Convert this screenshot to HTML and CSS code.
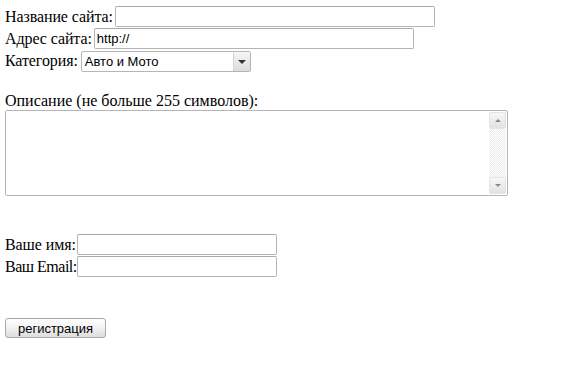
FILE: index.html
```html
<!DOCTYPE html>
<html lang="ru">
<head>
    <meta charset="UTF-8">
    <title>Добавить сайт</title>
    <link rel="stylesheet" href="styles.css">
</head>
<body>
    <form class="reg">
        <div class="row"><span class="lbl">Название сайта:</span><input class="field wide" type="text"></div>
        <div class="row"><span class="lbl">Адрес сайта:</span><input class="field wide" type="text" value="http://"></div>
        <div class="row"><span class="lbl cat">Категория:</span><span class="select"><span class="select-text">Авто и Мото</span><span class="select-btn"><span class="tri down dark"></span></span></span></div>

        <div class="row desc-label">Описание (не больше 255 символов):</div>
        <div class="area">
            <textarea class="area-text"></textarea>
            <div class="scroll">
                <div class="sbtn"><span class="tri up"></span></div>
                <div class="track"></div>
                <div class="sbtn"><span class="tri down"></span></div>
            </div>
        </div>

        <div class="row name-row"><span class="lbl user">Ваше имя:</span><input class="field short" type="text"></div>
        <div class="row"><span class="lbl user mail">Ваш Email:</span><input class="field short" type="text"></div>

        <div class="submit-row">
            <button class="btn" type="button">регистрация</button>
        </div>
    </form>
</body>
</html>
```

FILE: styles.css
```css
body{
    margin: 0;
    background: #ffffff;
    color: #000;
    font-family: "Liberation Serif", "Times New Roman", serif;
    font-size: 16px;
}
.reg{
    padding: 6px 0 0 5px;
    display: flex;
    flex-direction: column;
    align-items: flex-start;
}
.row{
    display: flex;
    align-items: center;
    height: 22px;
    white-space: nowrap;
}
.lbl{
    margin-right: 2px;
    letter-spacing: -0.1px;
}
.lbl.cat{ margin-right: 3px; }
.lbl.user{
    width: 70px;
    margin-right: 2px;
}
.lbl.mail{ letter-spacing: -0.5px; }
.field{
    box-sizing: border-box;
    height: 21px;
    margin: 0 0 1px 0;
    padding: 1px 2px;
    border: 1px solid #b5b5b5;
    border-top-color: #a9a9a9;
    border-radius: 2px;
    font-family: "Liberation Sans", Arial, sans-serif;
    font-size: 13px;
    color: #000;
    outline: none;
}
.wide{ width: 320px; }
.short{ width: 200px; }

.select{
    box-sizing: border-box;
    display: flex;
    align-items: center;
    width: 170px;
    height: 21px;
    margin: 1px 0 0 0;
    border: 1px solid #b5b5b5;
    border-radius: 2px;
    font-family: "Liberation Sans", Arial, sans-serif;
    font-size: 13px;
}
.select-text{
    flex: 1;
    padding-left: 3px;
}
.select-btn{
    box-sizing: border-box;
    width: 17px;
    height: 19px;
    display: flex;
    align-items: center;
    justify-content: center;
    border-left: 1px solid #d4d4d4;
    background: linear-gradient(#f6f6f6, #dcdcdc);
}

.tri{
    width: 0;
    height: 0;
    border-left: 3px solid transparent;
    border-right: 3px solid transparent;
}
.tri.down{ border-top: 3px solid #8a8a8a; }
.tri.up{ border-bottom: 3px solid #8a8a8a; }
.tri.dark{ border-top-color: #333; border-left-width: 4px; border-right-width: 4px; border-top-width: 4px; }

.desc-label{
    margin-top: 20px;
    height: 18px;
    align-items: flex-end;
}
.area{
    box-sizing: border-box;
    display: flex;
    width: 503px;
    height: 86px;
    border: 1px solid #b5b5b5;
    border-radius: 2px;
}
.area-text{
    flex: 1;
    border: none;
    resize: none;
    outline: none;
    margin: 0;
    padding: 2px;
}
.scroll{
    width: 17px;
    display: flex;
    flex-direction: column;
    padding: 1px 1px 1px 0;
}
.sbtn{
    height: 17px;
    box-sizing: border-box;
    display: flex;
    align-items: center;
    justify-content: center;
    border: 1px solid #e4e4e4;
    border-radius: 2px;
    background: linear-gradient(#f7f7f7, #e2e2e2);
}
.track{
    flex: 1;
    background-color: #fafafa;
    background-image: repeating-conic-gradient(#ececec 0 25%, #ffffff 0 50%);
    background-size: 2px 2px;
}

.name-row{
    margin-top: 38px;
}
.submit-row{
    margin-top: 40px;
}
.btn{
    box-sizing: border-box;
    width: 101px;
    height: 20px;
    margin: 0;
    padding: 0;
    border: 1px solid #a8a8a8;
    border-radius: 3px;
    background: linear-gradient(#ffffff 0%, #f3f3f3 45%, #dddddd 100%);
    font-family: "Liberation Sans", Arial, sans-serif;
    font-size: 13px;
    color: #000;
}
```
